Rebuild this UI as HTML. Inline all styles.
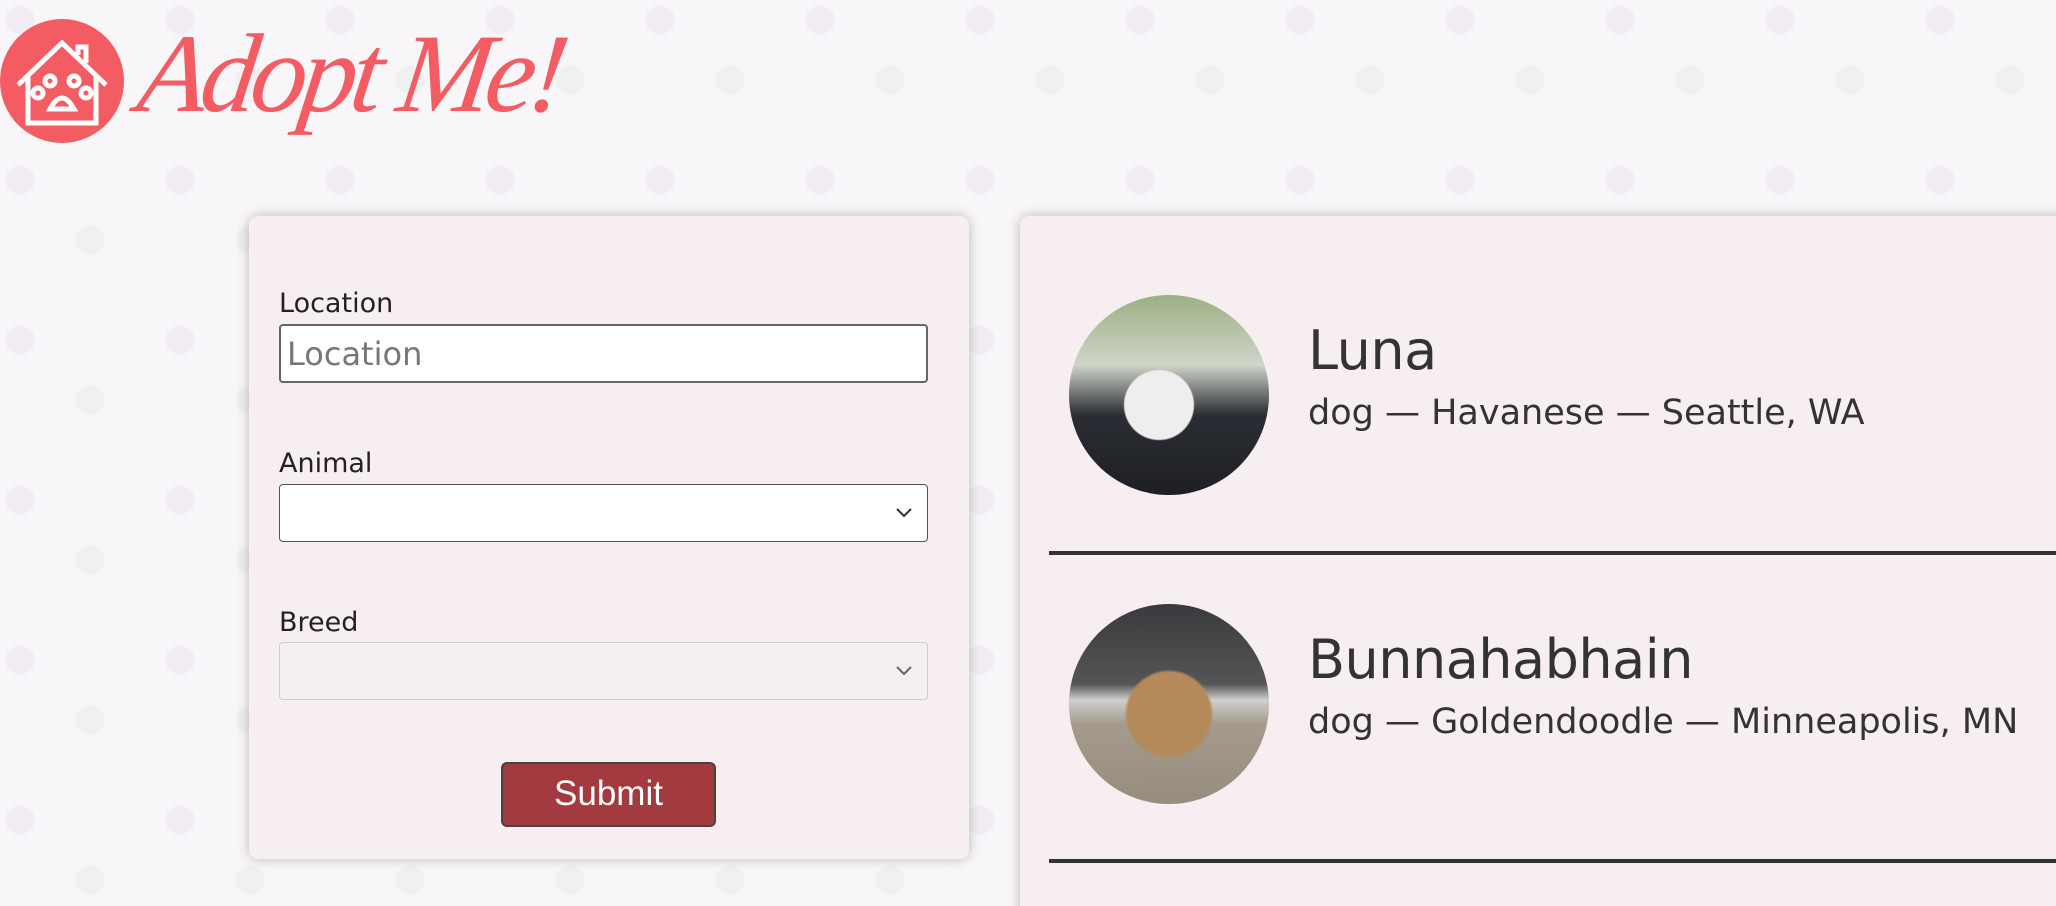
<!DOCTYPE html>
<html><head><meta charset="utf-8"><style>
*{box-sizing:border-box;margin:0;padding:0}
html,body{width:2056px;height:906px;overflow:hidden}
body{position:relative;font-family:"DejaVu Sans","Liberation Sans",sans-serif;color:#333;
background:#f8f6f8;
background-image:radial-gradient(circle at 20px 20px,rgba(190,170,210,.12) 14px,transparent 15px),radial-gradient(circle at 90px 80px,rgba(170,200,180,.12) 14px,transparent 15px);
background-size:160px 160px}
.logo{position:absolute;left:0;top:19px;width:124px;height:124px;border-radius:50%;background:#f25c62}
.brand{position:absolute;left:140px;top:10px;font-family:"Liberation Serif",serif;font-style:italic;font-size:112px;color:#f25c62;letter-spacing:-6px;transform:skewX(-8deg)}
.form{position:absolute;left:249px;top:216px;width:720px;height:643px;background:#f6eef0;border-radius:9px;box-shadow:0 0 12px rgba(0,0,0,.25)}
.lab{position:absolute;left:30px;font-size:27px;color:#222}
.inp{position:absolute;left:30px;width:649px;height:59px;border:2px solid #666;border-radius:4px;background:#fff;font-size:32px;color:#777;padding:9px 6px}
.sel{position:absolute;left:30px;width:649px;height:58px;border:1.5px solid #555;border-radius:4px;background:#fff}
.sel.dis{border-color:#ccc;background:#f4f0f2}
.sel svg{position:absolute;right:14px;top:22px}
.btn{position:absolute;left:252px;top:546px;width:215px;height:65px;background:#a33a40;border:2px solid #444;border-radius:6px;color:#fff;font-family:"Liberation Sans",sans-serif;font-size:35px;text-align:center;line-height:60px}
.res{position:absolute;left:1020px;top:216px;width:1060px;height:720px;background:#f6eef0;border-radius:9px;box-shadow:0 0 12px rgba(0,0,0,.25)}
.img{position:absolute;left:49px;width:200px;height:200px;border-radius:50%}
.nm{position:absolute;left:288px;font-size:54px;color:#333;letter-spacing:-.5px}
.sub{position:absolute;left:288px;font-size:35px;color:#333}
.hr{position:absolute;left:29px;right:0;height:4px;background:#333}
</style></head><body>
<div class="logo"><svg width="124" height="124" viewBox="0 0 124 124"><g fill="none" stroke="#fff" stroke-width="5"><path d="M18 66 L62 24 L106 66"/><path d="M28 58 V104 H96 V58"/><path d="M78 36 V28 H86 V44"/><circle cx="50" cy="62" r="5"/><circle cx="74" cy="62" r="5"/><circle cx="38" cy="74" r="5"/><circle cx="86" cy="74" r="5"/><path d="M50 90 Q62 68 74 90 Z"/></g></svg></div>
<div class="brand">Adopt Me!</div>
<div class="form">
<div class="lab" style="top:72px">Location</div>
<div class="inp" style="top:108px">Location</div>
<div class="lab" style="top:232px">Animal</div>
<div class="sel" style="top:268px"><svg width="18" height="12"><path d="M2 2 L9 9 L16 2" fill="none" stroke="#333" stroke-width="2"/></svg></div>
<div class="lab" style="top:391px">Breed</div>
<div class="sel dis" style="top:426px"><svg width="18" height="12"><path d="M2 2 L9 9 L16 2" fill="none" stroke="#666" stroke-width="2"/></svg></div>
<div class="btn">Submit</div>
</div>
<div class="res">
<div class="img" style="top:79px;background:radial-gradient(circle at 45% 55%,#eee 0 22%,transparent 23%),linear-gradient(#9cb083 0,#cfd4c8 35%,#2a2d33 60%,#1d1f24 100%)"></div>
<div class="nm" style="top:103px">Luna</div>
<div class="sub" style="top:177px">dog — Havanese — Seattle, WA</div>
<div class="hr" style="top:335px"></div>
<div class="img" style="top:388px;background:radial-gradient(circle at 50% 55%,#b48a5a 0 28%,transparent 30%),linear-gradient(#3a3a3e 0,#555 40%,#cfcfcf 48%,#a49b8d 60%,#978d7e 100%)"></div>
<div class="nm" style="top:412px">Bunnahabhain</div>
<div class="sub" style="top:486px">dog — Goldendoodle — Minneapolis, MN</div>
<div class="hr" style="top:643px"></div>
</div>
</body></html>
